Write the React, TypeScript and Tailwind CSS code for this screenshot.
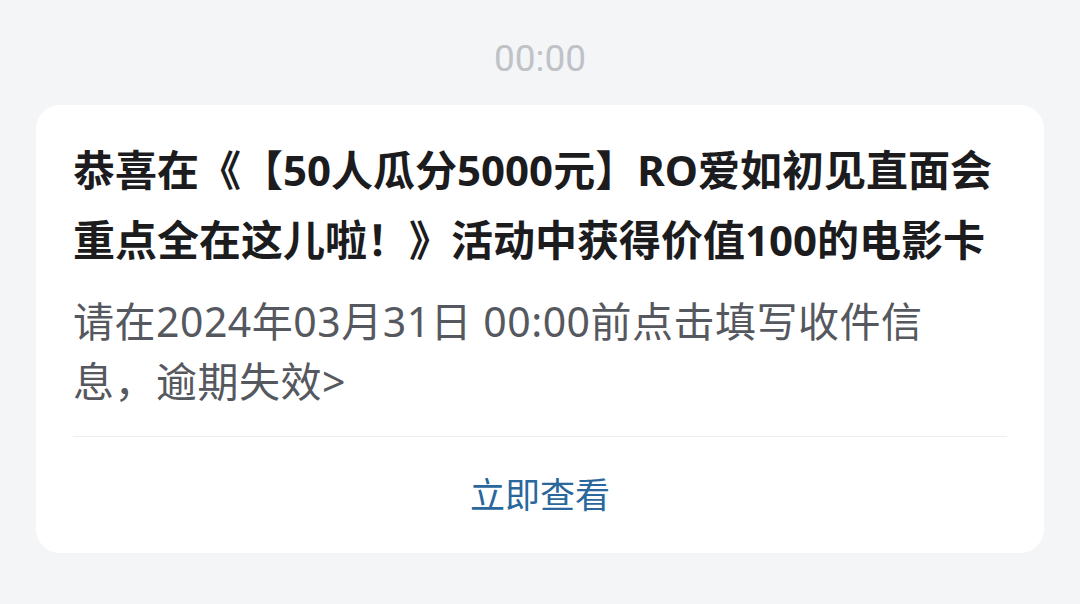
const cjk = { fontFamily: '"Noto Sans", "Noto Sans CJK SC", sans-serif' }

export default function App() {
  return (
    <div className="min-h-[604px] w-full bg-[#f4f5f7] pt-[35px]" style={cjk}>
      <div className="text-center text-[37px] leading-[48px] text-[#bfc2c7]" style={{ fontFamily: 'Roboto, "Noto Sans", sans-serif' }}>
        00:00
      </div>

      <div className="mx-[36px] mt-[22px] rounded-3xl bg-white">
        <div className="px-[37px] pt-[30px]">
          <h1 className="text-[42px] font-bold leading-[70px] text-[#1c1c1e] whitespace-nowrap [text-spacing-trim:space-all]">
            <span className="block">恭喜在《【50人瓜分5000元】RO爱如初见直面会</span>
            <span className="block">重点全在这儿啦！》活动中获得价值100的电影卡</span>
          </h1>
          <p className="mt-[16px] text-[41px] leading-[60px] tracking-[0.5px] text-[#55585e] whitespace-nowrap">
            <span className="block">请在2024年03月31日 00:00前点击填写收件信</span>
            <span className="block">息，逾期失效&gt;</span>
          </p>
          <div className="mt-[25px] h-px bg-[#eeeeef]" />
        </div>
        <button type="button" className="flex h-[116px] w-full items-center justify-center text-[35px] text-[#29679c]">
          立即查看
        </button>
      </div>
    </div>
  )
}
